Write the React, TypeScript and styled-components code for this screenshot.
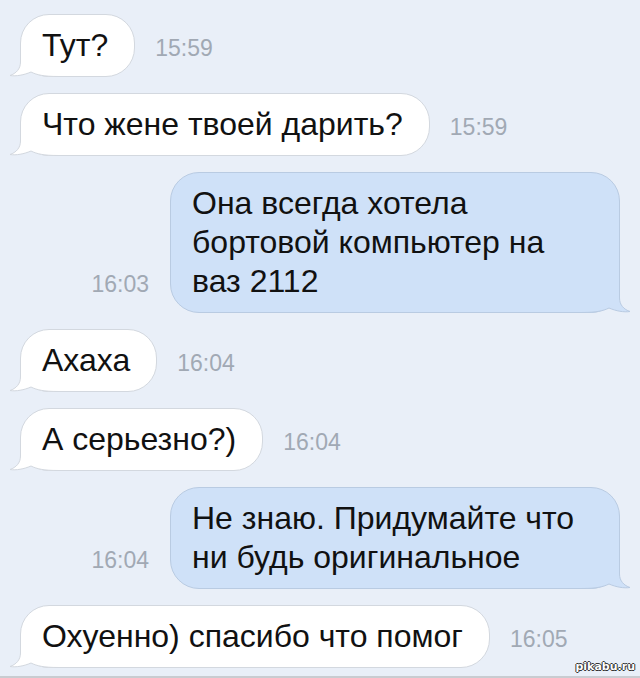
import React from 'react'
import styled, { createGlobalStyle } from 'styled-components';

const GlobalStyle = createGlobalStyle`
    html, body {
        margin: 0;
        padding: 0;
        background: #e9eff8;
    }
    body {
        font-family: "Liberation Sans", Arial, sans-serif;
    }
`;

const Screen = styled.div`
    width: 640px;
    height: 678px;
    box-sizing: border-box;
    padding: 14px 0 0;
    background: #e9eff8;
    border-bottom: 2px solid #c9ccd1;
    position: relative;
    overflow: hidden;
    display: flex;
    flex-direction: column;
    gap: 16px;
`;

const Row = styled.div<{ $out?: boolean }>`
    display: flex;
    align-items: last baseline;
    justify-content: ${p => (p.$out ? 'flex-end' : 'flex-start')};
    gap: ${p => (p.$out ? '21px' : '20px')};
    padding: ${p => (p.$out ? '0 20px 0 0' : '0 0 0 20px')};
`;

const Bubble = styled.div<{ $out?: boolean }>`
    position: relative;
    box-sizing: border-box;
    width: ${p => (p.$out ? '450px' : 'auto')};
    padding: 11px 26px 11px 21px;
    font-size: 32px;
    line-height: 39px;
    color: #111;
    background: ${p => (p.$out ? '#cfe1f8' : '#ffffff')};
    border: 1px solid ${p => (p.$out ? '#b9cbe2' : '#d3d8df')};
    border-radius: 29px;
`;

const Tail = styled.svg<{ $out?: boolean }>`
    position: absolute;
    bottom: -1px;
    ${p => (p.$out ? 'right: -13px; transform: scaleX(-1);' : 'left: -13px;')}
    width: 50px;
    height: 32px;
    overflow: visible;
`;

const Text = styled.span`
    position: relative;
    display: block;
    white-space: nowrap;
`;

const Time = styled.span`
    font-size: 23px;
    color: #a1a9b4;
    white-space: nowrap;
`;

const Watermark = styled.span`
    position: absolute;
    right: 5px;
    bottom: 3px;
    font-family: "DejaVu Sans", sans-serif;
    font-size: 11px;
    font-weight: bold;
    color: #fff;
    text-shadow: -1px 0 #333, 1px 0 #333, 0 -1px #333, 0 1px #333;
`;

type Msg = { lines: string[]; time: string; out?: boolean };

const messages: Msg[] = [
    { lines: ['Тут?'], time: '15:59' },
    { lines: ['Что жене твоей дарить?'], time: '15:59' },
    { lines: ['Она всегда хотела', 'бортовой компьютер на', 'ваз 2112'], time: '16:03', out: true },
    { lines: ['Ахаха'], time: '16:04' },
    { lines: ['А серьезно?)'], time: '16:04' },
    { lines: ['Не знаю. Придумайте что', 'ни будь оригинальное'], time: '16:04', out: true },
    { lines: ['Охуенно) спасибо что помог'], time: '16:05' },
];

const BubbleTail = ({ out }: { out?: boolean }) => {
    const fill = out ? '#cfe1f8' : '#ffffff';
    const stroke = out ? '#b9cbe2' : '#d3d8df';
    const edge = 'M12.5,0 L12.5,17 C12.5,24 8,28.5 2,30.5 C8,31.5 16,30 23,27 C29,30 36,31.5 50,31.5';
    return (
        <Tail $out={out} viewBox="0 0 50 32">
            <path d={edge + ' L50,0 Z'} fill={fill} />
            <path d={edge} fill="none" stroke={stroke} strokeWidth="1" />
        </Tail>
    );
};

const Message = ({ m }: { m: Msg }) => {
    const bubble = (
        <Bubble $out={m.out}>
            <BubbleTail out={m.out} />
            {m.lines.map((l, i) => (
                <Text key={i}>{l}</Text>
            ))}
        </Bubble>
    );
    return (
        <Row $out={m.out}>
            {m.out && <Time>{m.time}</Time>}
            {bubble}
            {!m.out && <Time>{m.time}</Time>}
        </Row>
    );
};

const App = () => {
    return (
        <>
            <GlobalStyle />
            <Screen>
                {messages.map((m, i) => (
                    <Message key={i} m={m} />
                ))}
                <Watermark>pikabu.ru</Watermark>
            </Screen>
        </>
    );
};

export default App
